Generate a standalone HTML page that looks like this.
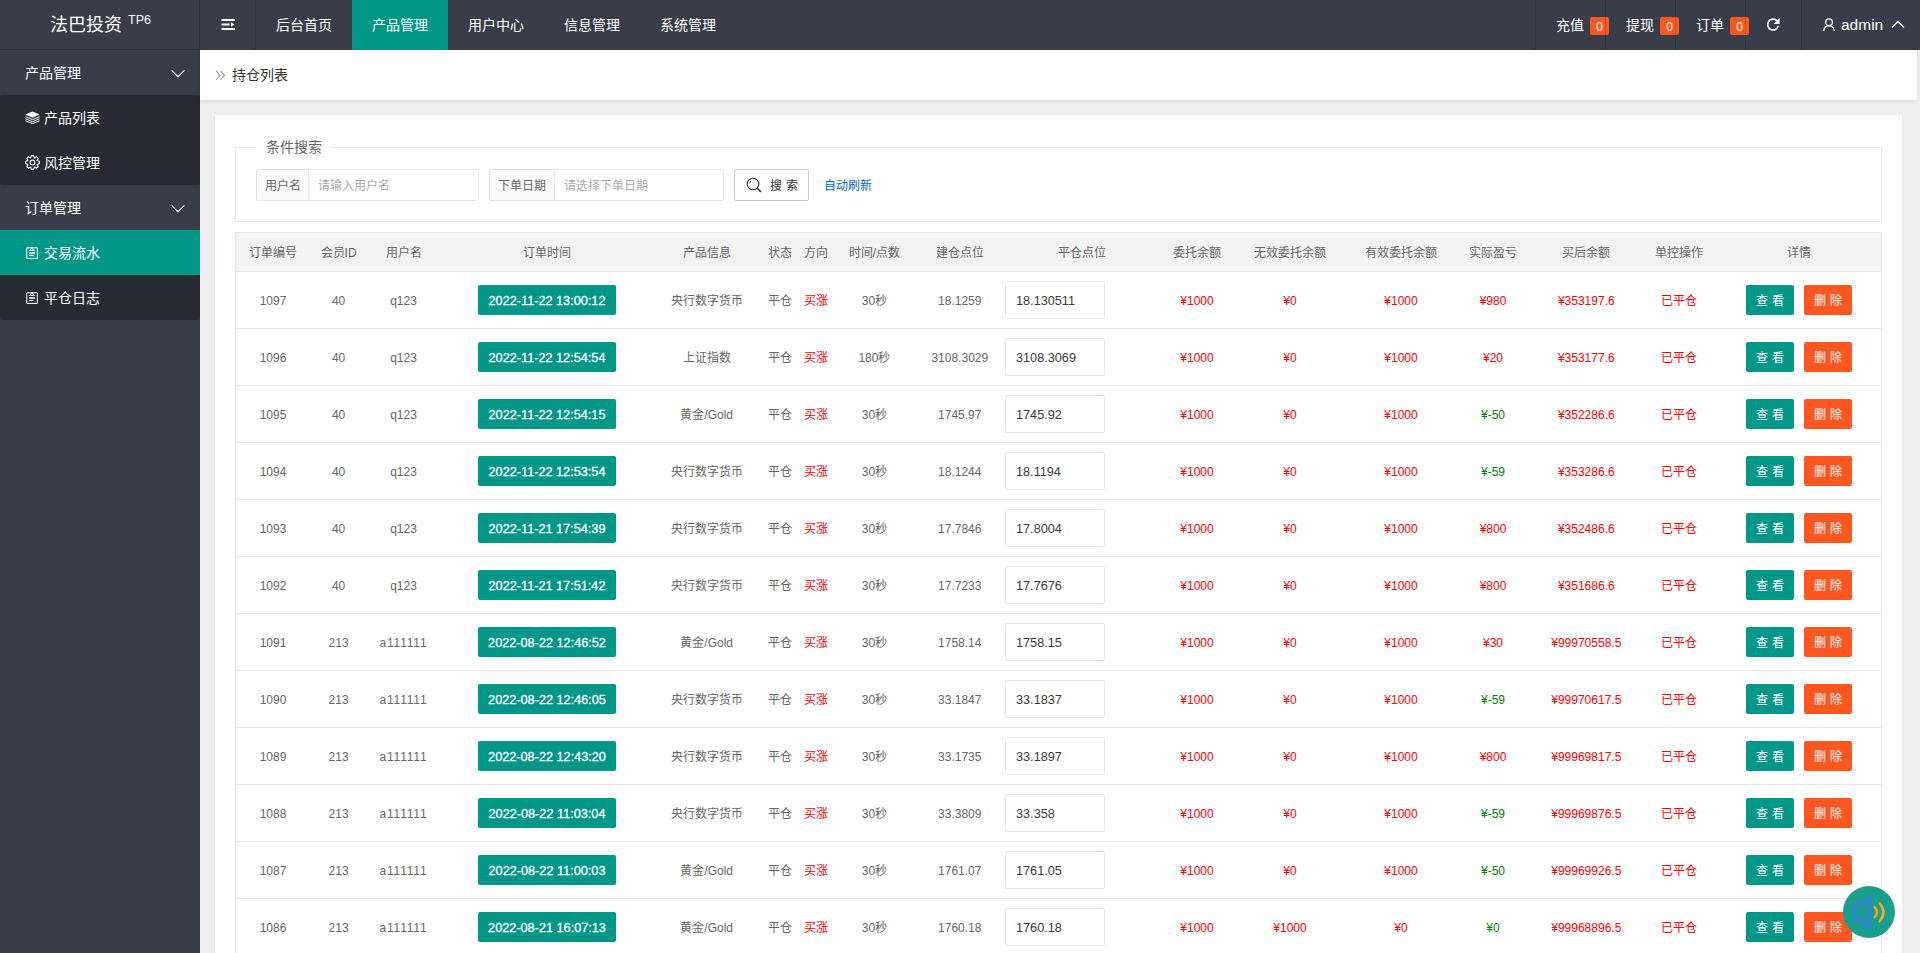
<!DOCTYPE html>
<html lang="zh-CN">
<head>
<meta charset="utf-8">
<title>法巴投资</title>
<style>
*{margin:0;padding:0;box-sizing:border-box}
html,body{width:1920px;height:953px;overflow:hidden}
body{font-family:"Liberation Sans",sans-serif;font-size:14px;color:#666;background:#eeeeee;position:relative}
.abs{position:absolute}
/* header */
#hd{position:absolute;left:0;top:0;width:1920px;height:50px;background:#393D49}
#logo{position:absolute;left:0;top:0;width:200px;height:50px;border-right:1px solid #2f323c;border-bottom:1px solid #2f323c;color:#fff}
#logo .t{position:absolute;left:50px;top:13px;font-size:18px;line-height:24px;white-space:nowrap}
#logo sup{position:absolute;left:128px;top:12px;font-size:12.5px;line-height:16px;font-weight:normal}
.sep{position:absolute;top:0;width:1px;height:50px;background:rgba(0,0,0,.16)}
.nav{position:absolute;top:0;height:50px;line-height:50px;color:#fff;font-size:14px;text-align:center;white-space:nowrap}
.nav.on{background:#009688}
.badge{position:absolute;top:17px;width:19px;height:18px;line-height:20px;border-radius:2px;background:#FF5722;color:#fff;font-size:12px;text-align:center}
/* sidebar */
#side{position:absolute;left:0;top:50px;width:200px;height:903px;background:#393D49}
.si{position:absolute;left:0;width:200px;height:45px;line-height:45px;color:#fff;font-size:14px;white-space:nowrap}
.si .tx{position:absolute;left:25px;top:1px}
.si.sub .tx{left:44px}
.child{position:absolute;left:0;width:200px;background:#282B33;border-radius:2px}
.si.on{background:#009688}
/* main */
#crumb{position:absolute;left:200px;top:50px;width:1717px;height:50px;background:#fff;box-shadow:0 1px 4px rgba(0,0,0,.1)}
#card{position:absolute;left:215px;top:115px;width:1687px;height:860px;background:#fff;box-shadow:0 1px 2px 0 rgba(0,0,0,.06)}
#fs{position:absolute;left:20px;top:32px;width:1647px;height:75px;border:1px solid #e6e6e6;border-bottom-color:#e6e6e6}
#legend{position:absolute;left:256px;top:137px;padding:0 10px;background:#fff;color:#666;font-size:14px;line-height:20px}
.lbl{position:absolute;top:169px;height:32px;line-height:32px;border:1px solid #e6e6e6;background:#FAFAFA;color:#666;font-size:12px;padding:0 8px;border-radius:2px 0 0 2px;white-space:nowrap}
.ipt{position:absolute;top:169px;height:32px;line-height:32px;border:1px solid #e6e6e6;border-left:0;background:#fff;color:#aaa;font-size:12px;padding:0 9px;border-radius:0 2px 2px 0;white-space:nowrap}
#sbtn{position:absolute;left:734px;top:169px;width:75px;height:32px;border:1px solid #C9C9C9;border-radius:2px;background:#fff;color:#333;font-size:12px;line-height:30px}
#auto{position:absolute;left:824px;top:176px;color:#0066cc;font-size:12px;line-height:20px}
/* table */
#tbl{position:absolute;left:235px;top:232px;width:1647px;height:760px;border:0;overflow:visible}
#tbl .frame{position:absolute;left:0;top:0;width:1647px;height:800px;border:1px solid #e6e6e6}
.thead{position:absolute;left:0;width:1647px;background:#f2f2f2;border:1px solid #e6e6e6;border-bottom:1px solid #e6e6e6}
.rowline{position:absolute;left:0;width:1647px;height:1px;background:#e6e6e6}
.c{position:absolute;text-align:center;font-size:12px;color:#666;white-space:nowrap}
.c.th{color:#666}
.c.red{color:#FF0000}
.c.green{color:#008000}
.dt{position:absolute;width:138px;height:30px;line-height:32px;background:#009688;color:#fff;font-size:12.7px;-webkit-text-stroke:0.3px #fff;text-align:center;border-radius:2px;white-space:nowrap}
.inp{position:absolute;width:100px;height:38px;line-height:38px;border:1px solid #e6e6e6;border-radius:2px;background:#fff;color:#3a3a3a;font-size:12.7px;padding-left:10px;white-space:nowrap}
.btn{position:absolute;width:48px;height:30px;line-height:32px;color:#fff;font-size:12px;text-align:center;border-radius:2px;white-space:nowrap}
.bv{background:#009688}
.bd{background:#FF5722}
#fab{position:absolute;left:1843px;top:886px;width:52px;height:52px;border-radius:50%;background:#1A9E8E}
</style>
</head>
<body>
<div id="hd">
  <div id="logo"><span class="t">法巴投资</span><sup>TP6</sup></div>
  <div class="sep" style="left:255px"></div>
  <svg class="abs" style="left:221px;top:18px" width="15" height="14" viewBox="0 0 15 14">
    <rect x="0.5" y="1" width="13.5" height="2" fill="#fff"/>
    <rect x="0.5" y="5.5" width="8" height="2" fill="#fff"/>
    <path d="M10 4.2 L13.5 6.5 L10 8.8 Z" fill="#fff"/>
    <rect x="0.5" y="10" width="13.5" height="2" fill="#fff"/>
  </svg>
  <div class="nav" style="left:256px;width:96px">后台首页</div>
  <div class="nav on" style="left:352px;width:96px">产品管理</div>
  <div class="nav" style="left:448px;width:96px">用户中心</div>
  <div class="nav" style="left:544px;width:96px">信息管理</div>
  <div class="nav" style="left:640px;width:96px">系统管理</div>

  <div class="nav" style="left:1556px">充值</div>
  <div class="badge" style="left:1590px">0</div>
  <div class="nav" style="left:1626px">提现</div>
  <div class="badge" style="left:1660px">0</div>
  <div class="nav" style="left:1696px">订单</div>
  <div class="badge" style="left:1730px">0</div>
  <svg class="abs" style="left:1766px;top:18px" width="14" height="14" viewBox="0 0 14 14">
    <path d="M10.9 2.7 A5.4 5.4 0 1 0 12.3 7.9" fill="none" stroke="#fff" stroke-width="1.7"/>
    <path d="M7.6 6 L13.6 0 L13.6 6 Z" fill="#fff"/>
  </svg>
  <svg class="abs" style="left:1823px;top:18px" width="12" height="14" viewBox="0 0 12 14">
    <circle cx="6" cy="4.2" r="3.4" fill="none" stroke="#fff" stroke-width="1.3"/>
    <path d="M0.8 13 C0.8 9.6 3 7.8 6 7.8 C9 7.8 11.2 9.6 11.2 13" fill="none" stroke="#fff" stroke-width="1.3"/>
  </svg>
  <div class="nav" style="left:1841px;font-size:15.5px">admin</div>
  <svg class="abs" style="left:1891px;top:20px" width="14" height="9" viewBox="0 0 14 9">
    <path d="M1 7.5 L7 1.5 L13 7.5" fill="none" stroke="#fff" stroke-width="1.3"/>
  </svg>
  <div class="sep" style="left:1535px"></div>
  <div class="sep" style="left:1605px"></div>
  <div class="sep" style="left:1675px"></div>
  <div class="sep" style="left:1745px"></div>
  <div class="sep" style="left:1801px"></div>
</div>

<div id="side">
  <div class="si" style="top:0"><span class="tx">产品管理</span>
    <svg class="abs" style="left:171px;top:19px" width="14" height="9" viewBox="0 0 14 9"><path d="M0.6 1.4 L7 7.6 L13.4 1.4" fill="none" stroke="#fff" stroke-width="1.2"/></svg>
  </div>
  <div class="child" style="top:45px;height:90px"></div>
  <div class="si sub" style="top:45px">
    <svg class="abs" style="left:24.5px;top:16px" width="15" height="13" viewBox="0 0 15 13">
      <path d="M7.5 0.4 L14.6 3.6 L7.5 6.8 L0.4 3.6 Z" fill="#fff"/>
      <path d="M0.4 5.6 L7.5 8.6 L14.6 5.6" fill="none" stroke="#fff" stroke-width="1"/>
      <path d="M0.4 7.7 L7.5 10.7 L14.6 7.7" fill="none" stroke="#fff" stroke-width="1"/>
      <path d="M0.4 9.8 L7.5 12.6 L14.6 9.8" fill="none" stroke="#fff" stroke-width="1"/>
    </svg>
    <span class="tx">产品列表</span></div>
  <div class="si sub" style="top:90px">
    <svg class="abs" style="left:24.5px;top:15px" width="15" height="15" viewBox="0 0 15 15">
      <path d="M5.59 2.88 L6.40 0.59 L8.60 0.59 L9.41 2.88 L9.41 2.88 L11.61 1.84 L13.16 3.39 L12.12 5.59 L12.12 5.59 L14.41 6.40 L14.41 8.60 L12.12 9.41 L12.12 9.41 L13.16 11.61 L11.61 13.16 L9.41 12.12 L9.41 12.12 L8.60 14.41 L6.40 14.41 L5.59 12.12 L5.59 12.12 L3.39 13.16 L1.84 11.61 L2.88 9.41 L2.88 9.41 L0.59 8.60 L0.59 6.40 L2.88 5.59 L2.88 5.59 L1.84 3.39 L3.39 1.84 L5.59 2.88 Z" fill="none" stroke="#fff" stroke-width="1.1" stroke-linejoin="round"/>
      <circle cx="7.5" cy="7.5" r="2.4" fill="none" stroke="#fff" stroke-width="1.1"/>
    </svg>
    <span class="tx">风控管理</span></div>
  <div class="si" style="top:135px"><span class="tx">订单管理</span>
    <svg class="abs" style="left:171px;top:19px" width="14" height="9" viewBox="0 0 14 9"><path d="M0.6 1.4 L7 7.6 L13.4 1.4" fill="none" stroke="#fff" stroke-width="1.2"/></svg>
  </div>
  <div class="child" style="top:180px;height:90px"></div>
  <div class="si sub on" style="top:180px">
    <svg class="abs" style="left:26px;top:16px" width="12" height="14" viewBox="0 0 12 14">
      <path d="M0.8 1.8 H11.3 V12.4 H0.8 Z" fill="none" stroke="#fff" stroke-width="1"/>
      <path d="M4.2 4.3 L6 1 L7.8 4.3 Z" fill="none" stroke="#fff" stroke-width="1"/>
      <path d="M3.2 4.4 H8.8" stroke="#fff" stroke-width="0.9"/>
      <path d="M3.2 7 H9" stroke="#fff" stroke-width="1.6"/>
      <path d="M3.2 9.5 H7.6" stroke="#fff" stroke-width="1"/>
    </svg>
    <span class="tx">交易流水</span></div>
  <div class="si sub" style="top:225px">
    <svg class="abs" style="left:26px;top:16px" width="12" height="14" viewBox="0 0 12 14">
      <path d="M0.8 1.8 H11.3 V12.4 H0.8 Z" fill="none" stroke="#fff" stroke-width="1"/>
      <path d="M4.2 4.3 L6 1 L7.8 4.3 Z" fill="none" stroke="#fff" stroke-width="1"/>
      <path d="M3.2 4.4 H8.8" stroke="#fff" stroke-width="0.9"/>
      <path d="M3.2 7 H9" stroke="#fff" stroke-width="1.6"/>
      <path d="M3.2 9.5 H7.6" stroke="#fff" stroke-width="1"/>
    </svg>
    <span class="tx">平仓日志</span></div>
</div>

<div id="crumb">
  <svg class="abs" style="left:15px;top:20px" width="11" height="11" viewBox="0 0 11 11">
    <path d="M1 0.8 L5 5.3 L1 9.8 M5.5 0.8 L9.5 5.3 L5.5 9.8" fill="none" stroke="#999" stroke-width="1.1"/>
  </svg>
  <div class="abs" style="left:32px;top:15px;font-size:14px;line-height:20px;color:#333">持仓列表</div>
</div>

<div id="card">
  <div id="fs"></div>
</div>
<div id="legend">条件搜索</div>
<div class="lbl" style="left:256px;width:53px">用户名</div>
<div class="ipt" style="left:309px;width:170px">请输入用户名</div>
<div class="lbl" style="left:489px;width:66px">下单日期</div>
<div class="ipt" style="left:555px;width:169px">请选择下单日期</div>
<div id="sbtn">
  <svg class="abs" style="left:11px;top:7px" width="17" height="17" viewBox="0 0 17 17">
    <circle cx="7" cy="7" r="5.8" fill="none" stroke="#333" stroke-width="1.1"/>
    <path d="M3.6 6.5 A3.5 3.5 0 0 1 5 4" fill="none" stroke="#333" stroke-width="0.9"/>
    <path d="M11.2 11.2 L15 15" stroke="#333" stroke-width="1.6"/>
  </svg>
  <span class="abs" style="left:35px;top:1px;white-space:nowrap">搜</span><span class="abs" style="left:51px;top:1px;white-space:nowrap">索</span>
</div>
<div id="auto">自动刷新</div>

<div id="tbl">
  <div class="frame"></div>
<div class="thead" style="top:0;height:40px"></div>
<div class="c th" style="left:-82.0px;top:2px;width:240px;height:39px;line-height:39px">订单编号</div>
<div class="c th" style="left:-16.4px;top:2px;width:240px;height:39px;line-height:39px">会员ID</div>
<div class="c th" style="left:48.5px;top:2px;width:240px;height:39px;line-height:39px">用户名</div>
<div class="c th" style="left:192.0px;top:2px;width:240px;height:39px;line-height:39px">订单时间</div>
<div class="c th" style="left:351.7px;top:2px;width:240px;height:39px;line-height:39px">产品信息</div>
<div class="c th" style="left:425.0px;top:2px;width:240px;height:39px;line-height:39px">状态</div>
<div class="c th" style="left:460.6px;top:2px;width:240px;height:39px;line-height:39px">方向</div>
<div class="c th" style="left:519.4px;top:2px;width:240px;height:39px;line-height:39px">时间/点数</div>
<div class="c th" style="left:604.8px;top:2px;width:240px;height:39px;line-height:39px">建仓点位</div>
<div class="c th" style="left:727.1px;top:2px;width:240px;height:39px;line-height:39px">平仓点位</div>
<div class="c th" style="left:842.0px;top:2px;width:240px;height:39px;line-height:39px">委托余额</div>
<div class="c th" style="left:935.0px;top:2px;width:240px;height:39px;line-height:39px">无效委托余额</div>
<div class="c th" style="left:1046.0px;top:2px;width:240px;height:39px;line-height:39px">有效委托余额</div>
<div class="c th" style="left:1138.0px;top:2px;width:240px;height:39px;line-height:39px">实际盈亏</div>
<div class="c th" style="left:1231.3px;top:2px;width:240px;height:39px;line-height:39px">买后余额</div>
<div class="c th" style="left:1324.0px;top:2px;width:240px;height:39px;line-height:39px">单控操作</div>
<div class="c th" style="left:1444.0px;top:2px;width:240px;height:39px;line-height:39px">详情</div>
<div class="rowline" style="top:96px"></div>
<div class="c " style="left:-82.0px;top:41px;width:240px;height:56px;line-height:56px">1097</div>
<div class="c " style="left:-16.4px;top:41px;width:240px;height:56px;line-height:56px">40</div>
<div class="c " style="left:48.5px;top:41px;width:240px;height:56px;line-height:56px">q123</div>
<div class="dt" style="left:243px;top:53px">2022-11-22 13:00:12</div>
<div class="c " style="left:351.7px;top:41px;width:240px;height:56px;line-height:56px">央行数字货币</div>
<div class="c " style="left:425.0px;top:41px;width:240px;height:56px;line-height:56px">平仓</div>
<div class="c red" style="left:460.6px;top:41px;width:240px;height:56px;line-height:56px">买涨</div>
<div class="c " style="left:519.4px;top:41px;width:240px;height:56px;line-height:56px">30秒</div>
<div class="c " style="left:604.8px;top:41px;width:240px;height:56px;line-height:56px">18.1259</div>
<div class="inp" style="left:770px;top:49px">18.130511</div>
<div class="c red" style="left:842.0px;top:41px;width:240px;height:56px;line-height:56px">¥1000</div>
<div class="c red" style="left:935.0px;top:41px;width:240px;height:56px;line-height:56px">¥0</div>
<div class="c red" style="left:1046.0px;top:41px;width:240px;height:56px;line-height:56px">¥1000</div>
<div class="c red" style="left:1138.0px;top:41px;width:240px;height:56px;line-height:56px">¥980</div>
<div class="c red" style="left:1231.3px;top:41px;width:240px;height:56px;line-height:56px">¥353197.6</div>
<div class="c red" style="left:1324.0px;top:41px;width:240px;height:56px;line-height:56px">已平仓</div>
<div class="btn bv" style="left:1511px;top:53px">查 看</div>
<div class="btn bd" style="left:1569px;top:53px">删 除</div>
<div class="rowline" style="top:153px"></div>
<div class="c " style="left:-82.0px;top:98px;width:240px;height:56px;line-height:56px">1096</div>
<div class="c " style="left:-16.4px;top:98px;width:240px;height:56px;line-height:56px">40</div>
<div class="c " style="left:48.5px;top:98px;width:240px;height:56px;line-height:56px">q123</div>
<div class="dt" style="left:243px;top:110px">2022-11-22 12:54:54</div>
<div class="c " style="left:351.7px;top:98px;width:240px;height:56px;line-height:56px">上证指数</div>
<div class="c " style="left:425.0px;top:98px;width:240px;height:56px;line-height:56px">平仓</div>
<div class="c red" style="left:460.6px;top:98px;width:240px;height:56px;line-height:56px">买涨</div>
<div class="c " style="left:519.4px;top:98px;width:240px;height:56px;line-height:56px">180秒</div>
<div class="c " style="left:604.8px;top:98px;width:240px;height:56px;line-height:56px">3108.3029</div>
<div class="inp" style="left:770px;top:106px">3108.3069</div>
<div class="c red" style="left:842.0px;top:98px;width:240px;height:56px;line-height:56px">¥1000</div>
<div class="c red" style="left:935.0px;top:98px;width:240px;height:56px;line-height:56px">¥0</div>
<div class="c red" style="left:1046.0px;top:98px;width:240px;height:56px;line-height:56px">¥1000</div>
<div class="c red" style="left:1138.0px;top:98px;width:240px;height:56px;line-height:56px">¥20</div>
<div class="c red" style="left:1231.3px;top:98px;width:240px;height:56px;line-height:56px">¥353177.6</div>
<div class="c red" style="left:1324.0px;top:98px;width:240px;height:56px;line-height:56px">已平仓</div>
<div class="btn bv" style="left:1511px;top:110px">查 看</div>
<div class="btn bd" style="left:1569px;top:110px">删 除</div>
<div class="rowline" style="top:210px"></div>
<div class="c " style="left:-82.0px;top:155px;width:240px;height:56px;line-height:56px">1095</div>
<div class="c " style="left:-16.4px;top:155px;width:240px;height:56px;line-height:56px">40</div>
<div class="c " style="left:48.5px;top:155px;width:240px;height:56px;line-height:56px">q123</div>
<div class="dt" style="left:243px;top:167px">2022-11-22 12:54:15</div>
<div class="c " style="left:351.7px;top:155px;width:240px;height:56px;line-height:56px">黄金/Gold</div>
<div class="c " style="left:425.0px;top:155px;width:240px;height:56px;line-height:56px">平仓</div>
<div class="c red" style="left:460.6px;top:155px;width:240px;height:56px;line-height:56px">买涨</div>
<div class="c " style="left:519.4px;top:155px;width:240px;height:56px;line-height:56px">30秒</div>
<div class="c " style="left:604.8px;top:155px;width:240px;height:56px;line-height:56px">1745.97</div>
<div class="inp" style="left:770px;top:163px">1745.92</div>
<div class="c red" style="left:842.0px;top:155px;width:240px;height:56px;line-height:56px">¥1000</div>
<div class="c red" style="left:935.0px;top:155px;width:240px;height:56px;line-height:56px">¥0</div>
<div class="c red" style="left:1046.0px;top:155px;width:240px;height:56px;line-height:56px">¥1000</div>
<div class="c green" style="left:1138.0px;top:155px;width:240px;height:56px;line-height:56px">¥-50</div>
<div class="c red" style="left:1231.3px;top:155px;width:240px;height:56px;line-height:56px">¥352286.6</div>
<div class="c red" style="left:1324.0px;top:155px;width:240px;height:56px;line-height:56px">已平仓</div>
<div class="btn bv" style="left:1511px;top:167px">查 看</div>
<div class="btn bd" style="left:1569px;top:167px">删 除</div>
<div class="rowline" style="top:267px"></div>
<div class="c " style="left:-82.0px;top:212px;width:240px;height:56px;line-height:56px">1094</div>
<div class="c " style="left:-16.4px;top:212px;width:240px;height:56px;line-height:56px">40</div>
<div class="c " style="left:48.5px;top:212px;width:240px;height:56px;line-height:56px">q123</div>
<div class="dt" style="left:243px;top:224px">2022-11-22 12:53:54</div>
<div class="c " style="left:351.7px;top:212px;width:240px;height:56px;line-height:56px">央行数字货币</div>
<div class="c " style="left:425.0px;top:212px;width:240px;height:56px;line-height:56px">平仓</div>
<div class="c red" style="left:460.6px;top:212px;width:240px;height:56px;line-height:56px">买涨</div>
<div class="c " style="left:519.4px;top:212px;width:240px;height:56px;line-height:56px">30秒</div>
<div class="c " style="left:604.8px;top:212px;width:240px;height:56px;line-height:56px">18.1244</div>
<div class="inp" style="left:770px;top:220px">18.1194</div>
<div class="c red" style="left:842.0px;top:212px;width:240px;height:56px;line-height:56px">¥1000</div>
<div class="c red" style="left:935.0px;top:212px;width:240px;height:56px;line-height:56px">¥0</div>
<div class="c red" style="left:1046.0px;top:212px;width:240px;height:56px;line-height:56px">¥1000</div>
<div class="c green" style="left:1138.0px;top:212px;width:240px;height:56px;line-height:56px">¥-59</div>
<div class="c red" style="left:1231.3px;top:212px;width:240px;height:56px;line-height:56px">¥353286.6</div>
<div class="c red" style="left:1324.0px;top:212px;width:240px;height:56px;line-height:56px">已平仓</div>
<div class="btn bv" style="left:1511px;top:224px">查 看</div>
<div class="btn bd" style="left:1569px;top:224px">删 除</div>
<div class="rowline" style="top:324px"></div>
<div class="c " style="left:-82.0px;top:269px;width:240px;height:56px;line-height:56px">1093</div>
<div class="c " style="left:-16.4px;top:269px;width:240px;height:56px;line-height:56px">40</div>
<div class="c " style="left:48.5px;top:269px;width:240px;height:56px;line-height:56px">q123</div>
<div class="dt" style="left:243px;top:281px">2022-11-21 17:54:39</div>
<div class="c " style="left:351.7px;top:269px;width:240px;height:56px;line-height:56px">央行数字货币</div>
<div class="c " style="left:425.0px;top:269px;width:240px;height:56px;line-height:56px">平仓</div>
<div class="c red" style="left:460.6px;top:269px;width:240px;height:56px;line-height:56px">买涨</div>
<div class="c " style="left:519.4px;top:269px;width:240px;height:56px;line-height:56px">30秒</div>
<div class="c " style="left:604.8px;top:269px;width:240px;height:56px;line-height:56px">17.7846</div>
<div class="inp" style="left:770px;top:277px">17.8004</div>
<div class="c red" style="left:842.0px;top:269px;width:240px;height:56px;line-height:56px">¥1000</div>
<div class="c red" style="left:935.0px;top:269px;width:240px;height:56px;line-height:56px">¥0</div>
<div class="c red" style="left:1046.0px;top:269px;width:240px;height:56px;line-height:56px">¥1000</div>
<div class="c red" style="left:1138.0px;top:269px;width:240px;height:56px;line-height:56px">¥800</div>
<div class="c red" style="left:1231.3px;top:269px;width:240px;height:56px;line-height:56px">¥352486.6</div>
<div class="c red" style="left:1324.0px;top:269px;width:240px;height:56px;line-height:56px">已平仓</div>
<div class="btn bv" style="left:1511px;top:281px">查 看</div>
<div class="btn bd" style="left:1569px;top:281px">删 除</div>
<div class="rowline" style="top:381px"></div>
<div class="c " style="left:-82.0px;top:326px;width:240px;height:56px;line-height:56px">1092</div>
<div class="c " style="left:-16.4px;top:326px;width:240px;height:56px;line-height:56px">40</div>
<div class="c " style="left:48.5px;top:326px;width:240px;height:56px;line-height:56px">q123</div>
<div class="dt" style="left:243px;top:338px">2022-11-21 17:51:42</div>
<div class="c " style="left:351.7px;top:326px;width:240px;height:56px;line-height:56px">央行数字货币</div>
<div class="c " style="left:425.0px;top:326px;width:240px;height:56px;line-height:56px">平仓</div>
<div class="c red" style="left:460.6px;top:326px;width:240px;height:56px;line-height:56px">买涨</div>
<div class="c " style="left:519.4px;top:326px;width:240px;height:56px;line-height:56px">30秒</div>
<div class="c " style="left:604.8px;top:326px;width:240px;height:56px;line-height:56px">17.7233</div>
<div class="inp" style="left:770px;top:334px">17.7676</div>
<div class="c red" style="left:842.0px;top:326px;width:240px;height:56px;line-height:56px">¥1000</div>
<div class="c red" style="left:935.0px;top:326px;width:240px;height:56px;line-height:56px">¥0</div>
<div class="c red" style="left:1046.0px;top:326px;width:240px;height:56px;line-height:56px">¥1000</div>
<div class="c red" style="left:1138.0px;top:326px;width:240px;height:56px;line-height:56px">¥800</div>
<div class="c red" style="left:1231.3px;top:326px;width:240px;height:56px;line-height:56px">¥351686.6</div>
<div class="c red" style="left:1324.0px;top:326px;width:240px;height:56px;line-height:56px">已平仓</div>
<div class="btn bv" style="left:1511px;top:338px">查 看</div>
<div class="btn bd" style="left:1569px;top:338px">删 除</div>
<div class="rowline" style="top:438px"></div>
<div class="c " style="left:-82.0px;top:383px;width:240px;height:56px;line-height:56px">1091</div>
<div class="c " style="left:-16.4px;top:383px;width:240px;height:56px;line-height:56px">213</div>
<div class="c " style="left:48.5px;top:383px;width:240px;height:56px;line-height:56px"><span style="letter-spacing:0.8px">a111111</span></div>
<div class="dt" style="left:243px;top:395px">2022-08-22 12:46:52</div>
<div class="c " style="left:351.7px;top:383px;width:240px;height:56px;line-height:56px">黄金/Gold</div>
<div class="c " style="left:425.0px;top:383px;width:240px;height:56px;line-height:56px">平仓</div>
<div class="c red" style="left:460.6px;top:383px;width:240px;height:56px;line-height:56px">买涨</div>
<div class="c " style="left:519.4px;top:383px;width:240px;height:56px;line-height:56px">30秒</div>
<div class="c " style="left:604.8px;top:383px;width:240px;height:56px;line-height:56px">1758.14</div>
<div class="inp" style="left:770px;top:391px">1758.15</div>
<div class="c red" style="left:842.0px;top:383px;width:240px;height:56px;line-height:56px">¥1000</div>
<div class="c red" style="left:935.0px;top:383px;width:240px;height:56px;line-height:56px">¥0</div>
<div class="c red" style="left:1046.0px;top:383px;width:240px;height:56px;line-height:56px">¥1000</div>
<div class="c red" style="left:1138.0px;top:383px;width:240px;height:56px;line-height:56px">¥30</div>
<div class="c red" style="left:1231.3px;top:383px;width:240px;height:56px;line-height:56px">¥99970558.5</div>
<div class="c red" style="left:1324.0px;top:383px;width:240px;height:56px;line-height:56px">已平仓</div>
<div class="btn bv" style="left:1511px;top:395px">查 看</div>
<div class="btn bd" style="left:1569px;top:395px">删 除</div>
<div class="rowline" style="top:495px"></div>
<div class="c " style="left:-82.0px;top:440px;width:240px;height:56px;line-height:56px">1090</div>
<div class="c " style="left:-16.4px;top:440px;width:240px;height:56px;line-height:56px">213</div>
<div class="c " style="left:48.5px;top:440px;width:240px;height:56px;line-height:56px"><span style="letter-spacing:0.8px">a111111</span></div>
<div class="dt" style="left:243px;top:452px">2022-08-22 12:46:05</div>
<div class="c " style="left:351.7px;top:440px;width:240px;height:56px;line-height:56px">央行数字货币</div>
<div class="c " style="left:425.0px;top:440px;width:240px;height:56px;line-height:56px">平仓</div>
<div class="c red" style="left:460.6px;top:440px;width:240px;height:56px;line-height:56px">买涨</div>
<div class="c " style="left:519.4px;top:440px;width:240px;height:56px;line-height:56px">30秒</div>
<div class="c " style="left:604.8px;top:440px;width:240px;height:56px;line-height:56px">33.1847</div>
<div class="inp" style="left:770px;top:448px">33.1837</div>
<div class="c red" style="left:842.0px;top:440px;width:240px;height:56px;line-height:56px">¥1000</div>
<div class="c red" style="left:935.0px;top:440px;width:240px;height:56px;line-height:56px">¥0</div>
<div class="c red" style="left:1046.0px;top:440px;width:240px;height:56px;line-height:56px">¥1000</div>
<div class="c green" style="left:1138.0px;top:440px;width:240px;height:56px;line-height:56px">¥-59</div>
<div class="c red" style="left:1231.3px;top:440px;width:240px;height:56px;line-height:56px">¥99970617.5</div>
<div class="c red" style="left:1324.0px;top:440px;width:240px;height:56px;line-height:56px">已平仓</div>
<div class="btn bv" style="left:1511px;top:452px">查 看</div>
<div class="btn bd" style="left:1569px;top:452px">删 除</div>
<div class="rowline" style="top:552px"></div>
<div class="c " style="left:-82.0px;top:497px;width:240px;height:56px;line-height:56px">1089</div>
<div class="c " style="left:-16.4px;top:497px;width:240px;height:56px;line-height:56px">213</div>
<div class="c " style="left:48.5px;top:497px;width:240px;height:56px;line-height:56px"><span style="letter-spacing:0.8px">a111111</span></div>
<div class="dt" style="left:243px;top:509px">2022-08-22 12:43:20</div>
<div class="c " style="left:351.7px;top:497px;width:240px;height:56px;line-height:56px">央行数字货币</div>
<div class="c " style="left:425.0px;top:497px;width:240px;height:56px;line-height:56px">平仓</div>
<div class="c red" style="left:460.6px;top:497px;width:240px;height:56px;line-height:56px">买涨</div>
<div class="c " style="left:519.4px;top:497px;width:240px;height:56px;line-height:56px">30秒</div>
<div class="c " style="left:604.8px;top:497px;width:240px;height:56px;line-height:56px">33.1735</div>
<div class="inp" style="left:770px;top:505px">33.1897</div>
<div class="c red" style="left:842.0px;top:497px;width:240px;height:56px;line-height:56px">¥1000</div>
<div class="c red" style="left:935.0px;top:497px;width:240px;height:56px;line-height:56px">¥0</div>
<div class="c red" style="left:1046.0px;top:497px;width:240px;height:56px;line-height:56px">¥1000</div>
<div class="c red" style="left:1138.0px;top:497px;width:240px;height:56px;line-height:56px">¥800</div>
<div class="c red" style="left:1231.3px;top:497px;width:240px;height:56px;line-height:56px">¥99969817.5</div>
<div class="c red" style="left:1324.0px;top:497px;width:240px;height:56px;line-height:56px">已平仓</div>
<div class="btn bv" style="left:1511px;top:509px">查 看</div>
<div class="btn bd" style="left:1569px;top:509px">删 除</div>
<div class="rowline" style="top:609px"></div>
<div class="c " style="left:-82.0px;top:554px;width:240px;height:56px;line-height:56px">1088</div>
<div class="c " style="left:-16.4px;top:554px;width:240px;height:56px;line-height:56px">213</div>
<div class="c " style="left:48.5px;top:554px;width:240px;height:56px;line-height:56px"><span style="letter-spacing:0.8px">a111111</span></div>
<div class="dt" style="left:243px;top:566px">2022-08-22 11:03:04</div>
<div class="c " style="left:351.7px;top:554px;width:240px;height:56px;line-height:56px">央行数字货币</div>
<div class="c " style="left:425.0px;top:554px;width:240px;height:56px;line-height:56px">平仓</div>
<div class="c red" style="left:460.6px;top:554px;width:240px;height:56px;line-height:56px">买涨</div>
<div class="c " style="left:519.4px;top:554px;width:240px;height:56px;line-height:56px">30秒</div>
<div class="c " style="left:604.8px;top:554px;width:240px;height:56px;line-height:56px">33.3809</div>
<div class="inp" style="left:770px;top:562px">33.358</div>
<div class="c red" style="left:842.0px;top:554px;width:240px;height:56px;line-height:56px">¥1000</div>
<div class="c red" style="left:935.0px;top:554px;width:240px;height:56px;line-height:56px">¥0</div>
<div class="c red" style="left:1046.0px;top:554px;width:240px;height:56px;line-height:56px">¥1000</div>
<div class="c green" style="left:1138.0px;top:554px;width:240px;height:56px;line-height:56px">¥-59</div>
<div class="c red" style="left:1231.3px;top:554px;width:240px;height:56px;line-height:56px">¥99969876.5</div>
<div class="c red" style="left:1324.0px;top:554px;width:240px;height:56px;line-height:56px">已平仓</div>
<div class="btn bv" style="left:1511px;top:566px">查 看</div>
<div class="btn bd" style="left:1569px;top:566px">删 除</div>
<div class="rowline" style="top:666px"></div>
<div class="c " style="left:-82.0px;top:611px;width:240px;height:56px;line-height:56px">1087</div>
<div class="c " style="left:-16.4px;top:611px;width:240px;height:56px;line-height:56px">213</div>
<div class="c " style="left:48.5px;top:611px;width:240px;height:56px;line-height:56px"><span style="letter-spacing:0.8px">a111111</span></div>
<div class="dt" style="left:243px;top:623px">2022-08-22 11:00:03</div>
<div class="c " style="left:351.7px;top:611px;width:240px;height:56px;line-height:56px">黄金/Gold</div>
<div class="c " style="left:425.0px;top:611px;width:240px;height:56px;line-height:56px">平仓</div>
<div class="c red" style="left:460.6px;top:611px;width:240px;height:56px;line-height:56px">买涨</div>
<div class="c " style="left:519.4px;top:611px;width:240px;height:56px;line-height:56px">30秒</div>
<div class="c " style="left:604.8px;top:611px;width:240px;height:56px;line-height:56px">1761.07</div>
<div class="inp" style="left:770px;top:619px">1761.05</div>
<div class="c red" style="left:842.0px;top:611px;width:240px;height:56px;line-height:56px">¥1000</div>
<div class="c red" style="left:935.0px;top:611px;width:240px;height:56px;line-height:56px">¥0</div>
<div class="c red" style="left:1046.0px;top:611px;width:240px;height:56px;line-height:56px">¥1000</div>
<div class="c green" style="left:1138.0px;top:611px;width:240px;height:56px;line-height:56px">¥-50</div>
<div class="c red" style="left:1231.3px;top:611px;width:240px;height:56px;line-height:56px">¥99969926.5</div>
<div class="c red" style="left:1324.0px;top:611px;width:240px;height:56px;line-height:56px">已平仓</div>
<div class="btn bv" style="left:1511px;top:623px">查 看</div>
<div class="btn bd" style="left:1569px;top:623px">删 除</div>
<div class="rowline" style="top:723px"></div>
<div class="c " style="left:-82.0px;top:668px;width:240px;height:56px;line-height:56px">1086</div>
<div class="c " style="left:-16.4px;top:668px;width:240px;height:56px;line-height:56px">213</div>
<div class="c " style="left:48.5px;top:668px;width:240px;height:56px;line-height:56px"><span style="letter-spacing:0.8px">a111111</span></div>
<div class="dt" style="left:243px;top:680px">2022-08-21 16:07:13</div>
<div class="c " style="left:351.7px;top:668px;width:240px;height:56px;line-height:56px">黄金/Gold</div>
<div class="c " style="left:425.0px;top:668px;width:240px;height:56px;line-height:56px">平仓</div>
<div class="c red" style="left:460.6px;top:668px;width:240px;height:56px;line-height:56px">买涨</div>
<div class="c " style="left:519.4px;top:668px;width:240px;height:56px;line-height:56px">30秒</div>
<div class="c " style="left:604.8px;top:668px;width:240px;height:56px;line-height:56px">1760.18</div>
<div class="inp" style="left:770px;top:676px">1760.18</div>
<div class="c red" style="left:842.0px;top:668px;width:240px;height:56px;line-height:56px">¥1000</div>
<div class="c red" style="left:935.0px;top:668px;width:240px;height:56px;line-height:56px">¥1000</div>
<div class="c red" style="left:1046.0px;top:668px;width:240px;height:56px;line-height:56px">¥0</div>
<div class="c green" style="left:1138.0px;top:668px;width:240px;height:56px;line-height:56px">¥0</div>
<div class="c red" style="left:1231.3px;top:668px;width:240px;height:56px;line-height:56px">¥99968896.5</div>
<div class="c red" style="left:1324.0px;top:668px;width:240px;height:56px;line-height:56px">已平仓</div>
<div class="btn bv" style="left:1511px;top:680px">查 看</div>
<div class="btn bd" style="left:1569px;top:680px">删 除</div>
</div>

<div id="fab">
  <svg class="abs" style="left:0;top:0" width="52" height="52" viewBox="0 0 52 52">
    <path d="M12 18.3 H17 L26.2 11.3 V40.7 L17 33.3 H12 Q10.8 25.8 12 18.3 Z" fill="none" stroke="#3B7BF0" stroke-width="2.5" stroke-linejoin="round"/>
    <path d="M31.6 21.2 Q36.6 26.2 31.6 31.2" fill="none" stroke="#F5A623" stroke-width="2.5" stroke-linecap="round"/>
    <path d="M36.6 17.2 Q44.2 26.2 36.6 35.2" fill="none" stroke="#F5A623" stroke-width="2.5" stroke-linecap="round"/>
  </svg>
</div>
</body>
</html>
